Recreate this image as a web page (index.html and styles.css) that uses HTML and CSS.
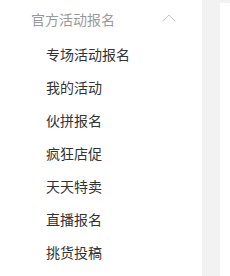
FILE: index.html
```html
<!DOCTYPE html>
<html lang="zh">
<head>
  <meta charset="UTF-8">
  <title>官方活动报名</title>
  <link rel="stylesheet" href="styles.css">
</head>
<body>
  <div class="layout">
    <div class="sidebar">
      <div class="group-title">
        <span>官方活动报名</span>
        <svg class="arrow" width="14" height="8" viewBox="0 0 14 8">
          <path d="M0.5 7.5 L7 1 L13.5 7.5" fill="none" stroke="#c8c8c8" stroke-width="1"/>
        </svg>
      </div>
      <ul class="menu">
        <li>专场活动报名</li>
        <li>我的活动</li>
        <li>伙拼报名</li>
        <li>疯狂店促</li>
        <li>天天特卖</li>
        <li>直播报名</li>
        <li>挑货投稿</li>
      </ul>
    </div>
    <div class="gutter"></div>
    <div class="content">
      <div class="card"></div>
    </div>
  </div>
</body>
</html>
```

FILE: styles.css
```css
body {
  margin: 0;
  font-family: "Noto Sans CJK SC", "Liberation Sans", sans-serif;
  background: #fff;
}

.layout {
  display: flex;
  height: 276px;
}

.sidebar {
  width: 202px;
  background: #fff;
}

.group-title {
  display: flex;
  align-items: center;
  justify-content: space-between;
  height: 38px;
  padding: 0 26px 0 31px;
  font-size: 14px;
  color: #999;
}

.arrow {
  margin-top: -2px;
}

.menu {
  list-style: none;
  margin: 0;
  padding: 0;
}

.menu li {
  height: 33px;
  line-height: 33px;
  padding-left: 46px;
  font-size: 14px;
  color: #333;
}

.menu li:first-child {
  margin-top: 0;
}

.gutter {
  width: 18px;
  background: #f2f2f2;
}

.content {
  flex: 1;
  background: #fff;
  border-top: 3px solid #f2f2f2;
}
```
